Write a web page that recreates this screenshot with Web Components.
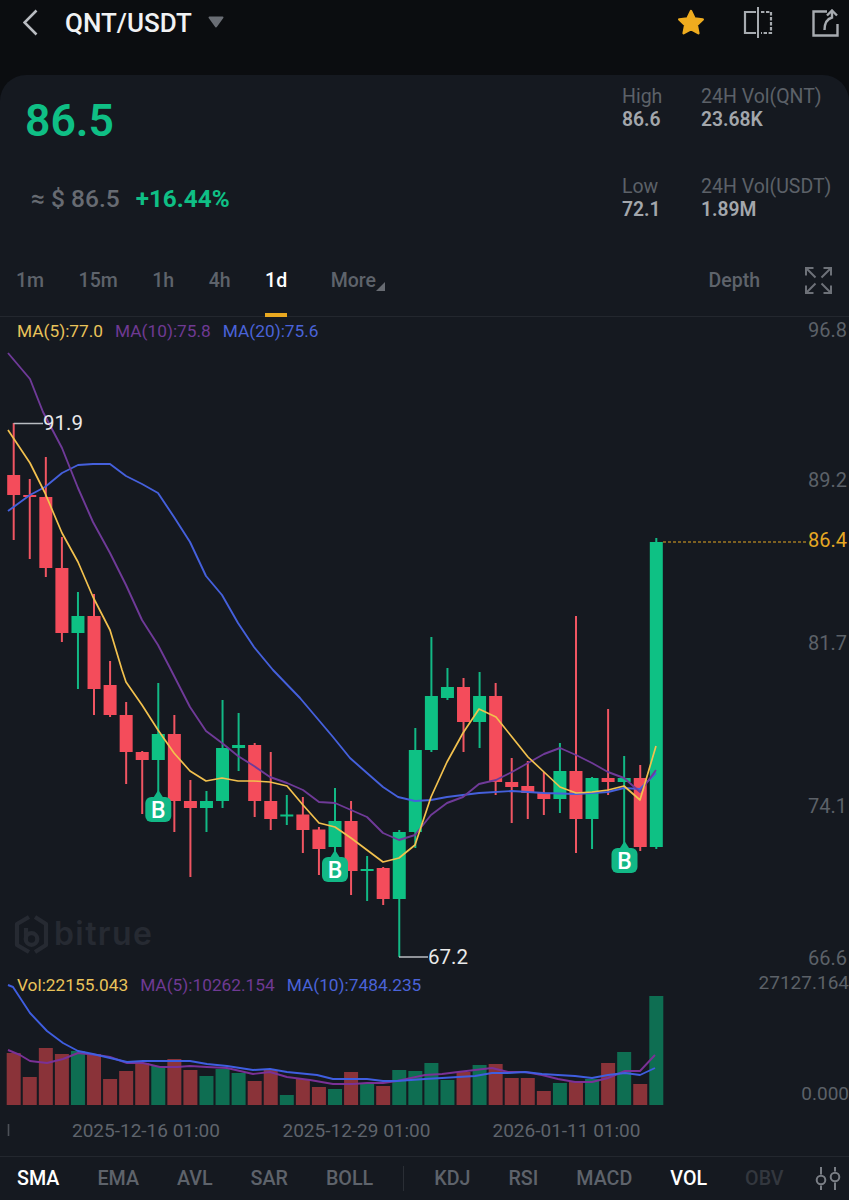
<!DOCTYPE html>
<html lang="en">
<head>
<meta charset="utf-8">
<title>QNT/USDT</title>
<style>
  html, body { margin: 0; background: #0b0d10; }
  body { font-family: Roboto, "Liberation Sans", sans-serif; width: 849px; height: 1200px; overflow: hidden; }
</style>
</head>
<body>
<market-screen>
  <top-bar slot="top" pair="QNT/USDT"></top-bar>
  <ticker-panel slot="body" price="86.5" fiat="≈ $ 86.5" change="+16.44%">
    <stat-cell label="High" value="86.6"></stat-cell>
    <stat-cell label="24H Vol(QNT)" value="23.68K"></stat-cell>
    <stat-cell label="Low" value="72.1"></stat-cell>
    <stat-cell label="24H Vol(USDT)" value="1.89M"></stat-cell>
  </ticker-panel>
  <interval-tabs slot="body"></interval-tabs>
  <kline-chart slot="body"></kline-chart>
  <indicator-tabs slot="body"></indicator-tabs>
</market-screen>

<script>
class MarketScreen extends HTMLElement {
  constructor() {
    super();
    this.attachShadow({ mode: "open" }).innerHTML = `
<style>
  :host { display: block; width: 849px; height: 1200px; background: #0b0d10; color: #fff; }
  .card { height: 1125px; background: #151920; border-radius: 26px 26px 0 0; display: flex; flex-direction: column; }
</style>
<slot name="top"></slot>
<div class="card"><slot name="body"></slot></div>`;
  }
}

class TopBar extends HTMLElement {
  constructor() {
    super();
    this.attachShadow({ mode: "open" }).innerHTML = `
<style>
  :host { display: flex; align-items: flex-start; height: 75px; padding-left: 23px; box-sizing: border-box; }
  svg { display: block; flex: none; }
  .title { margin: 8px 0 0 27px; font-size: 26px; line-height: 30px; font-weight: 500; color: #f1f2f3; width: 127px; white-space: nowrap; }
  .caret { margin: 16px 0 0 16px; }
  .star { margin: 9px 0 0 auto; }
  .split { margin: 7px 0 0 38px; }
  .share { margin: 9px 10px 0 39px; }
</style>
<svg width="15" height="27" viewBox="0 0 15 27" style="margin-top:9px"><path d="M13.5 1.5 1.5 13.5 13.5 25.5" fill="none" stroke="#b9bcc1" stroke-width="2.6"/></svg>
<div class="title">${this.getAttribute("pair")}</div>
<svg class="caret" width="16" height="12" viewBox="0 0 16 12"><path d="M1.5 1.5H14.5L8 10.5Z" fill="#6a6e75" stroke="#6a6e75" stroke-width="2" stroke-linejoin="round"/></svg>
<svg class="star" width="28" height="27" viewBox="0 0 28 27"><path d="M14 2 17.6 9.4 25.8 10.4 19.8 16 21.4 24.2 14 20.2 6.6 24.2 8.2 16 2.2 10.4 10.4 9.4Z" fill="#efac1f" stroke="#efac1f" stroke-width="2.4" stroke-linejoin="round"/></svg>
<svg class="split" width="30" height="31" viewBox="0 0 30 31" fill="none" stroke="#a7abb0" stroke-width="2.2">
  <path d="M13 5H2V26H13"/><path d="M15 0V31" stroke-width="2"/><path d="M18 5H28V26H18" stroke-dasharray="3.4 1.6"/>
</svg>
<svg class="share" width="27" height="28" viewBox="0 0 27 28" fill="none" stroke="#a7abb0" stroke-width="2.4">
  <path d="M15 2.5H1.5V26.5H25.5V15"/><path d="M12.5 21C12.5 13.5 15 10 20 8.5V2"/><path d="M15 6.5 20 1.5 25 6.5"/>
</svg>`;
  }
}

class StatCell extends HTMLElement {
  constructor() {
    super();
    this.attachShadow({ mode: "open" }).innerHTML = `
<style>
  :host { display: block; white-space: nowrap; }
  .label { font-size: 19.5px; line-height: 24px; color: #5c6168; }
  .value { font-size: 19.3px; line-height: 22px; font-weight: 600; color: #a3a7ac; }
</style>
<div class="label">${this.getAttribute("label")}</div>
<div class="value">${this.getAttribute("value")}</div>`;
  }
}

class TickerPanel extends HTMLElement {
  constructor() {
    super();
    this.attachShadow({ mode: "open" }).innerHTML = `
<style>
  :host { display: flex; justify-content: space-between; height: 187px; flex: none; box-sizing: border-box; padding: 10px 0 0 25px; }
  .price { font-size: 44.5px; line-height: 52px; font-weight: 600; color: #0fbf85; margin-top: 10px; }
  .sub { display: flex; align-items: center; gap: 16px; margin: 36px 0 0 6px; height: 30px; }
  .fiat { font-size: 24.5px; font-weight: 500; color: #676b72; }
  .change { font-size: 24.3px; font-weight: 700; color: #0fbf85; }
  .stats { display: grid; grid-template-columns: 79px 148px; row-gap: 44px; align-content: start; }
</style>
<div>
  <div class="price">${this.getAttribute("price")}</div>
  <div class="sub"><span class="fiat">${this.getAttribute("fiat")}</span><span class="change">${this.getAttribute("change")}</span></div>
</div>
<div class="stats"><slot></slot></div>`;
  }
}

class TabItem extends HTMLElement {
  constructor() {
    super();
    this.attachShadow({ mode: "open" }).innerHTML = `
<style>
  :host { display: block; position: relative; font-size: var(--tab-size, 19.5px); font-weight: 500; color: #5e636b; white-space: nowrap; }
  :host([active]) { color: #fff; }
  :host([dim]) { color: #33373e; }
  :host([active][mark])::after { content: ""; position: absolute; left: 0; right: 0; bottom: -25px; height: 4px; background: #e9a820; }
</style>
<slot></slot>`;
  }
}

class IntervalTabs extends HTMLElement {
  constructor() {
    super();
    this.attachShadow({ mode: "open" }).innerHTML = `
<style>
  :host { display: flex; align-items: center; gap: 34.5px; flex: none; height: 55px; box-sizing: border-box; padding: 0 17px 18px 16px; border-bottom: 1px solid #23272e; }
  .more { margin-left: 9px; position: relative; margin-right: 9px; }
  .tri { position: absolute; left: 100%; bottom: 1px; }
  .push { margin-left: auto; display: flex; align-items: center; gap: 45px; }
  svg { display: block; }
</style>
<tab-item>1m</tab-item><tab-item>15m</tab-item><tab-item>1h</tab-item><tab-item>4h</tab-item>
<tab-item active mark>1d</tab-item>
<tab-item class="more">More<svg class="tri" width="9" height="9" viewBox="0 0 9 9"><path d="M9 0V9H0Z" fill="#676b72"/></svg></tab-item>
<div class="push">
  <tab-item>Depth</tab-item>
  <svg width="27" height="27" viewBox="0 0 27 27" fill="none" stroke="#6d7178" stroke-width="2">
    <path d="M8.5 1H1V8.5M1.5 1.5 10.5 10.5"/><path d="M18.5 1H26V8.5M25.5 1.5 16.5 10.5"/>
    <path d="M1 18.5V26H8.5M1.5 25.5 10.5 16.5"/><path d="M26 18.5V26H18.5M25.5 25.5 16.5 16.5"/>
  </svg>
</div>`;
  }
}

class IndicatorTabs extends HTMLElement {
  constructor() {
    super();
    this.attachShadow({ mode: "open" }).innerHTML = `
<style>
  :host { --tab-size: 19.7px; display: flex; align-items: center; gap: 38px; flex: none; height: 44px; box-sizing: border-box; padding-left: 17px; border-top: 1px solid #23272e; }
  .sep { width: 1px; height: 25px; background: #2a2e35; margin: 0 -8px; }
  svg { display: block; margin-left: -7px; }
</style>
<tab-item active>SMA</tab-item><tab-item>EMA</tab-item><tab-item>AVL</tab-item><tab-item>SAR</tab-item><tab-item>BOLL</tab-item>
<span class="sep"></span>
<tab-item>KDJ</tab-item><tab-item>RSI</tab-item><tab-item>MACD</tab-item><tab-item active>VOL</tab-item><tab-item dim>OBV</tab-item>
<svg width="27" height="25" viewBox="0 0 27 25" fill="none" stroke="#7a7e85" stroke-width="2">
  <circle cx="6" cy="14" r="4.3"/><path d="M6 1V8.5M6 19.5V24"/>
  <circle cx="20" cy="11" r="4.3"/><path d="M20 1V5.5M20 16.5V24"/>
</svg>`;
  }
}

// [index colour, high, open/close top, open/close bottom, low] in page pixels
const CANDLES = [
  ["r",423,475,495,540],["r",479,495,497,559],["r",457,497,568,577],["r",537,568,633,642],
  ["g",592,616,633,689],["r",594,616,689,715],["r",661,685,715,717],["r",702,715,752,784],
  ["r",751,752,760,814],["g",683,734,760,795],["r",715,734,801,832],["r",780,801,808,877],
  ["g",791,801,808,832],["g",700,748,801,808],["g",713,745,748,771],["r",743,745,801,817],
  ["r",752,801,819,830],["g",795,814.5,816.5,825],["r",797,814.5,830,853],["r",827,829.5,849,875],
  ["g",788,821,847,855],["r",801,821,871,895],["g",856,869,871,901],["r",867,868,899,905],
  ["g",830,832,899,957],["g",728,750,832,848],["g",637,696,750,752],["g",668,687,698,700],
  ["r",678,687,722,752],["g",672,696,722,748],["r",683,696,782,795],["r",758,782,787,823],
  ["r",761,786,793,819],["r",772,793,799,815],["g",743,771,799,813],["r",616,771,819,853],
  ["g",777,778,819,849],["r",709,778,782,795],["g",756,778,782,845],["r",765,778,847,851],
  ["g",538,542,847,849],
];
// volume bar tops, the base is at y=1105
const VOL_TOPS = [1053,1077,1048,1054,1051,1054,1079,1071,1063,1066,1059,1070,1076,1069,1073,1081,1070,1095,1079,1087,1089,1072,1083,1086,1070,1071,1063,1080,1072,1065,1064,1078,1078,1091,1083,1081,1079,1063,1052,1084,996];

const MA5 = "8,430 30,463 45,493 62,533 78,562 93,597 110,630 122,670 126,682 142,705 158,730 174,753 190,771 206,781 222,778 238,781 254,781 270,782 287,786 303,805 319,823 335,827 351,838 367,850 383,862 399,858 415,845 431,797 447,762 463,733 479,709 496,717 512,737 528,757 544,772 560,787 576,793 592,792 608,790 624,786 640,800 656,746";
const MA10 = "8,353 30,379 43,412 62,448 78,488 93,522 110,553 126,585 142,620 158,645 170,668 190,707 206,731 222,743 238,756 254,766 270,777 287,783 303,790 319,802 335,803 351,810 367,817 383,833 399,840 415,835 431,815 447,803 463,797 479,784 496,780 512,772 528,763 544,754 560,748 576,755 592,763 608,772 624,778 640,792 656,770";
const MA20 = "8,511 30,495 45,487 62,473 78,465 93,464 110,464 126,476 142,484 158,493 174,517 190,542 206,576 222,595 238,623 254,647 273,670 300,698 333,737 350,758 367,773 383,787 398,797 415,801 431,800 447,797 479,793 512,791 544,793 576,794 592,793 608,792 624,788 640,789 656,773";
const VOL_MA10 = "8,985 13,987 30,1013 47,1031 63,1043 78,1051 93,1054 110,1058 127,1062 143,1061 160,1061 190,1061 207,1064 227,1066 253,1070 270,1069 287,1072 317,1075 333,1079 353,1079 367,1079 383,1081 397,1081 425,1079 442,1078 458,1077 475,1076 492,1073 508,1073 525,1072 542,1074 558,1075 575,1076 592,1078 608,1075 625,1073 640,1075 655,1068";
const VOL_MA5 = "8,1050 20,1055 30,1061 47,1063 63,1059 78,1053 97,1055 110,1057 127,1063 143,1063 160,1067 177,1067 190,1066 207,1067 227,1068 253,1074 270,1072 287,1077 310,1080 333,1084 353,1084 367,1083 383,1083 397,1081 425,1075 442,1074 458,1072 475,1070 492,1068 508,1072 525,1072 542,1075 558,1079 575,1082 592,1082 608,1078 625,1071 640,1071 655,1055";

const candleX = (i) => 13.7 + i * 16.065;

class KlineChart extends HTMLElement {
  constructor() {
    super();
    const wick = { r: "#f05562", g: "#12b985" };
    const body = { r: "#f44c5b", g: "#0ec184" };
    const volFill = { r: "#8a3339", g: "#0e6e52" };

    let bars = "";
    CANDLES.forEach((c, i) => {
      const x = candleX(i);
      bars += `<path d="M${x} ${c[1]}V${c[4]}" stroke="${wick[c[0]]}" stroke-width="2"/>`;
      bars += `<rect x="${x - 6.5}" y="${c[2]}" width="13" height="${c[3] - c[2]}" fill="${body[c[0]]}"/>`;
    });

    let vols = "";
    VOL_TOPS.forEach((top, i) => {
      vols += `<rect x="${candleX(i) - 7}" y="${top}" width="14" height="${1105 - top}" fill="${volFill[CANDLES[i][0]]}"/>`;
    });

    const line = (pts, color, w = 1.9) => `<polyline points="${pts}" fill="none" stroke="${color}" stroke-width="${w}" stroke-linejoin="round"/>`;
    const badge = (x, tip) => `
      <path d="M${x - 4.5} ${tip + 7}L${x} ${tip}L${x + 4.5} ${tip + 7}Z" fill="#12b886"/>
      <rect x="${x - 13}" y="${tip + 7}" width="26" height="25" rx="6" fill="#12b886"/>
      <text x="${x}" y="${tip + 27.5}" text-anchor="middle" font-size="23" font-weight="500" fill="#fff">B</text>`;
    const axis = (text, y, color = "#5c6168") => `<text x="808" y="${y}" font-size="20" fill="${color}">${text}</text>`;
    const axisEnd = (text, y) => `<text x="849" y="${y}" font-size="19" text-anchor="end" fill="#5c6168">${text}</text>`;
    const date = (text, x) => `<text x="${x}" y="1137" font-size="19" text-anchor="middle" fill="#5f646c">${text}</text>`;

    this.attachShadow({ mode: "open" }).innerHTML = `
<style>
  :host { display: block; position: relative; flex: none; height: 839px; overflow: hidden; }
  svg { display: block; font-family: inherit; }
  .legend { position: absolute; left: 17px; display: flex; gap: 12px; font-size: 17.3px; line-height: 20px; white-space: nowrap; }
  .y { color: #e9c35a; } .p { color: #6f3a93; } .b { color: #4a63d8; }
</style>
<svg width="849" height="839" viewBox="0 317 849 839">
  <g aria-label="watermark">
    <g fill="none" stroke="#262a32" stroke-width="4.2" stroke-linejoin="round">
      <path d="M29 917 17 924V945L29 952"/><path d="M35 917 46 924V945L35 952"/>
      <path d="M26 928V940"/><circle cx="31.5" cy="939" r="5.8"/>
    </g>
    <text x="54" y="945" font-family="Inter, sans-serif" font-size="32" font-weight="600" letter-spacing="1.4" fill="#262a32">bitrue</text>
  </g>
  ${vols}
  ${bars}
  ${line(VOL_MA5, "#7a3196")}
  ${line(VOL_MA10, "#3f5ee0")}
  ${line(MA20, "#4560dc")}
  ${line(MA10, "#6f3a98")}
  ${line(MA5, "#f2c14e", 1.7)}
  ${badge(158.3, 790)}
  ${badge(335, 850)}
  ${badge(624.5, 841)}
  <path d="M13.7 423.5H43M399 957H428" stroke="#b9bcc1" stroke-width="1.4"/>
  <text x="43" y="430" font-size="20.5" fill="#e9e9ea">91.9</text>
  <text x="428" y="964" font-size="20.5" fill="#e9e9ea">67.2</text>
  <path d="M663 542H808" stroke="#e6a823" stroke-width="1.2" stroke-dasharray="3 2"/>
  ${axis("96.8", 337)}${axis("89.2", 487)}${axis("86.4", 547, "#e6a823")}${axis("81.7", 650)}${axis("74.1", 813)}${axis("66.6", 965)}
  ${axisEnd("27127.164", 989)}${axisEnd("0.000", 1100)}
  <path d="M8.5 1124V1136" stroke="#4d5158" stroke-width="1.6"/>
  ${date("2025-12-16 01:00", 146)}${date("2025-12-29 01:00", 356.5)}${date("2026-01-11 01:00", 566.5)}
</svg>
<div class="legend" style="top:4px"><span class="y">MA(5):77.0</span><span class="p">MA(10):75.8</span><span class="b">MA(20):75.6</span></div>
<div class="legend" style="top:658px"><span class="y">Vol:22155.043</span><span class="p">MA(5):10262.154</span><span class="b">MA(10):7484.235</span></div>`;
  }
}

customElements.define("market-screen", MarketScreen);
customElements.define("top-bar", TopBar);
customElements.define("stat-cell", StatCell);
customElements.define("ticker-panel", TickerPanel);
customElements.define("tab-item", TabItem);
customElements.define("interval-tabs", IntervalTabs);
customElements.define("indicator-tabs", IndicatorTabs);
customElements.define("kline-chart", KlineChart);
</script>
</body>
</html>
